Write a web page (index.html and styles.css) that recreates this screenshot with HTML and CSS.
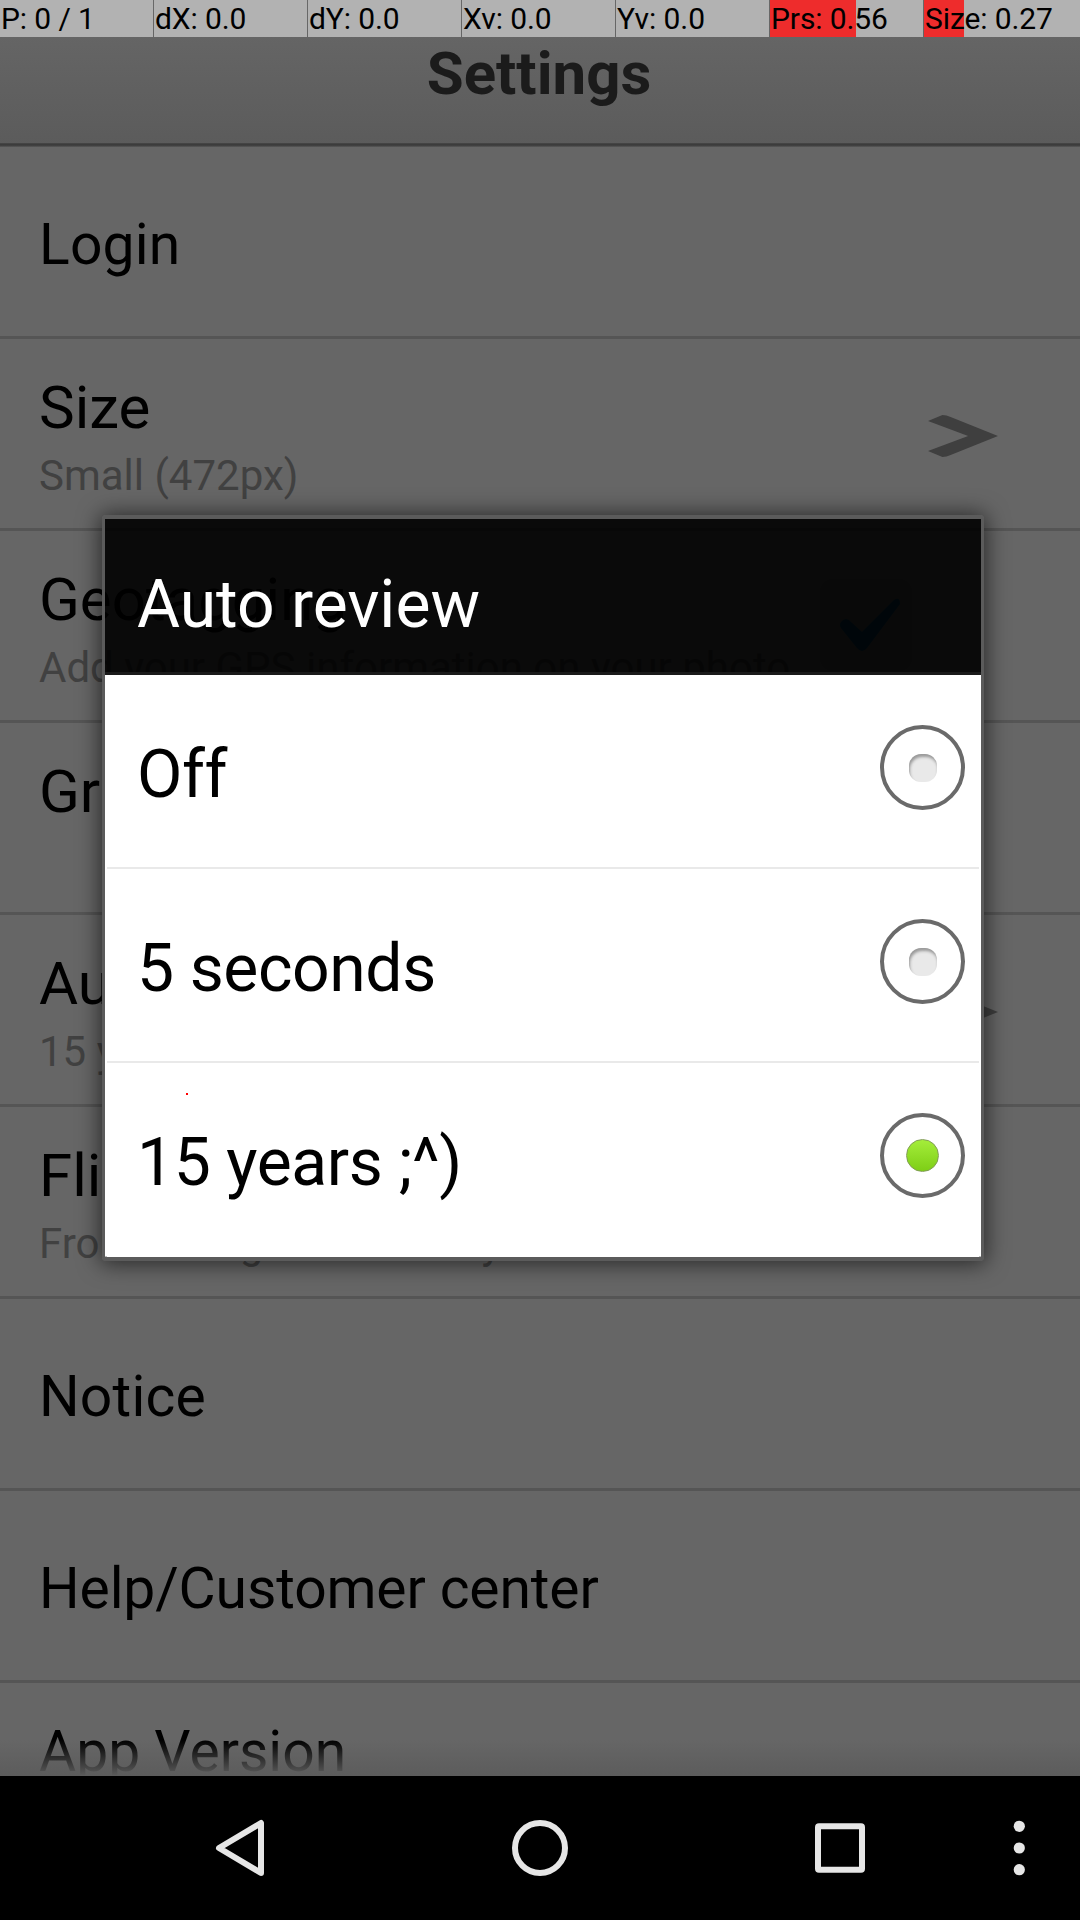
FILE: index.html
```
<!DOCTYPE html>
<html lang="en">
<head>
<meta charset="utf-8">
<title>Settings</title>
<link rel="stylesheet" href="styles.css">
</head>
<body>
<div class="screen">
  <header class="app-header"><h1>Settings</h1></header>
  <main class="list">
    <section class="row single"><div class="name">Login</div></section>
    <section class="row">
      <div class="text"><div class="name">Size</div><div class="sub">Small (472px)</div></div>
      <svg class="arrow" viewBox="0 0 68 42" width="70" height="42" preserveAspectRatio="none"><path d="M0 6L14 0Q18 0 22 2L68 21L22 40Q18 42 14 42L0 36L39 21Z"/></svg>
    </section>
    <section class="row">
      <div class="text"><div class="name">Geotagging</div><div class="sub">Add your GPS information on your photo</div></div>
      <svg class="check" viewBox="0 0 92 92" width="92" height="92"><rect x="1.500" y="1.500" width="89" height="89" rx="12"/><path d="M21 43Q26 37 31 43L42 53L74 21Q80 17 80 25L47 69Q42 75 37 69L21 49Q19 46 21 43Z"/></svg>
    </section>
    <section class="row"><div class="text"><div class="name">Grid</div></div></section>
    <section class="row">
      <div class="text"><div class="name">Auto review</div><div class="sub">15 years ;^)</div></div>
      <svg class="arrow" viewBox="0 0 68 42" width="70" height="42" preserveAspectRatio="none"><path d="M0 6L14 0Q18 0 22 2L68 21L22 40Q18 42 14 42L0 36L39 21Z"/></svg>
    </section>
    <section class="row">
      <div class="text"><div class="name">Flip</div><div class="sub">Front facing camera only</div></div>
    </section>
    <section class="row single"><div class="name">Notice</div></section>
    <section class="row single"><div class="name long">Help/Customer center</div></section>
    <section class="row version"><div class="text"><div class="name">App Version</div></div></section>
  </main>
  <nav class="nav">
    <svg viewBox="0 0 1080 144" width="1080" height="144">
      <path class="line" d="M219 72L261 47V97Z"/>
      <circle class="line" cx="540" cy="72" r="25"/>
      <rect class="line" x="818" y="50.300" width="44" height="43.500" rx="1"/>
      <circle class="dot" cx="1019.300" cy="50.300" r="5.600"/>
      <circle class="dot" cx="1019.300" cy="72" r="5.600"/>
      <circle class="dot" cx="1019.300" cy="93.700" r="5.600"/>
    </svg>
  </nav>

  <div class="dialog">
    <h2>Auto review</h2>
    <div class="options">
      <label class="option"><span>Off</span><i class="radio"></i></label>
      <label class="option"><span>5 seconds</span><i class="radio"></i></label>
      <label class="option"><span>15 years ;^)</span><i class="radio on"></i></label>
    </div>
  </div>

  <div class="pointer-bar">
    <span>P: 0 / 1</span><span>dX: 0.0</span><span>dY: 0.0</span><span>Xv: 0.0</span><span>Yv: 0.0</span><span class="prs">Prs: 0.56</span><span class="size">Size: 0.27</span>
  </div>
  <div class="touch"></div>
</div>
</body>
</html>
```
FILE: styles.css
```
* { box-sizing: border-box; }
body { margin: 0; background: #000; font-family: Roboto, "Liberation Sans", sans-serif; }
h1, h2 { margin: 0; }

.screen {
  position: relative;
  display: flex;
  flex-direction: column;
  width: 1080px;
  height: 1920px;
  overflow: hidden;
}

.app-header {
  flex: none;
  height: 147px;
  padding: 39px 2px 0 0;
  text-align: center;
  background:
    linear-gradient(#484848, #383838 50%, #5a5a5a) 0 143px / 100% 4px no-repeat,
    linear-gradient(#686868, #5b5b5b);
}
.app-header h1 { font-size: 60px; line-height: 70px; font-weight: 700; color: #1b1b1b; }

.list {
  position: relative;
  flex: 1;
  min-height: 0;
  overflow: hidden;
  background: #666;
}
.list::after {
  content: "";
  position: absolute;
  inset: auto 0 0;
  height: 36px;
  background: linear-gradient(rgba(92, 92, 92, 0), #5c5c5c);
}
.row {
  display: flex;
  justify-content: space-between;
  align-items: flex-start;
  height: 192px;
  padding: 34px 82px 0 39px;
  border-bottom: 3px solid #555;
  white-space: nowrap;
}
.name { font-size: 60px; line-height: 70px; color: #000; }
.sub { font-size: 42px; line-height: 50px; margin-top: 8px; color: #414141; }
.single { align-items: center; padding-top: 7px; }
.single .name, .version .name { font-size: 57px; }
.single .name { letter-spacing: 0.2px; }
.single .long { letter-spacing: -0.13px; }
.arrow { margin-top: 42px; fill: #3f3f3f; }
.check { margin: 14px 86px 0 0; fill: #606060; stroke: #5a5a5a; stroke-width: 3; }
.check path { fill: #004468; stroke: none; }

.nav { flex: none; height: 144px; background: #000; }
.nav svg { display: block; }
.line { fill: none; stroke: #e6e6e6; stroke-width: 6; stroke-linejoin: round; }
.dot { fill: #e6e6e6; }

.dialog {
  position: absolute;
  left: 102px;
  top: 515px;
  width: 882px;
  height: 746px;
  border: 3px solid #5b5b5b;
  border-top-width: 4px;
  border-bottom-width: 4px;
  border-radius: 4px;
  box-shadow: 0 1px 22px 2px rgba(0, 0, 0, 0.6);
}
.dialog h2 {
  height: 156px;
  padding: 48px 0 0 32px;
  font-size: 66px;
  line-height: 76px;
  font-weight: 400;
  color: #fff;
  background: rgba(0, 0, 0, 0.9);
  border-bottom: 3px solid #1a1a1a;
}
.options { height: 582px; padding: 0 2px; background: #fff; border-bottom: 1px solid #bbb; }
.option {
  display: flex;
  justify-content: space-between;
  height: 194px;
  padding: 62px 14px 0 30px;
  border-bottom: 2px solid #e9e9e9;
  font-size: 66px;
  line-height: 76px;
  letter-spacing: -0.4px;
  color: #000;
}
.option:last-child { border-bottom-color: #fff; }
.radio {
  display: grid;
  place-items: center;
  width: 85px;
  height: 85px;
  margin-top: -12px;
  border: 4px solid #6a6a6a;
  border-radius: 50%;
}
.radio::before {
  content: "";
  width: 28px;
  height: 28px;
  border-radius: 12px;
  background: #e9e9e9;
  box-shadow: inset 1px 3px 3px #999;
}
.radio.on::before {
  width: 31px;
  height: 31px;
  border-radius: 50%;
  background: linear-gradient(#a4ed3a, #7ece16);
  border: 1px solid #819d55;
  box-shadow: none;
}

.pointer-bar {
  position: absolute;
  inset: 0 0 auto;
  display: grid;
  grid-template-columns: repeat(6, 153px) 1fr;
  column-gap: 1px;
  height: 37px;
}
.pointer-bar span {
  padding-left: 1px;
  font-size: 30px;
  line-height: 37px;
  letter-spacing: -0.1px;
  color: #000;
  white-space: nowrap;
  background: #b2b2b2;
}
.pointer-bar .prs { background: linear-gradient(90deg, #ee2c2c 86px, #b2b2b2 86px); }
.pointer-bar .size { background: linear-gradient(90deg, #ee2c2c 40px, #b2b2b2 40px); }
.touch { position: absolute; left: 186px; top: 1093px; width: 2px; height: 2px; background: #f00; }
```
